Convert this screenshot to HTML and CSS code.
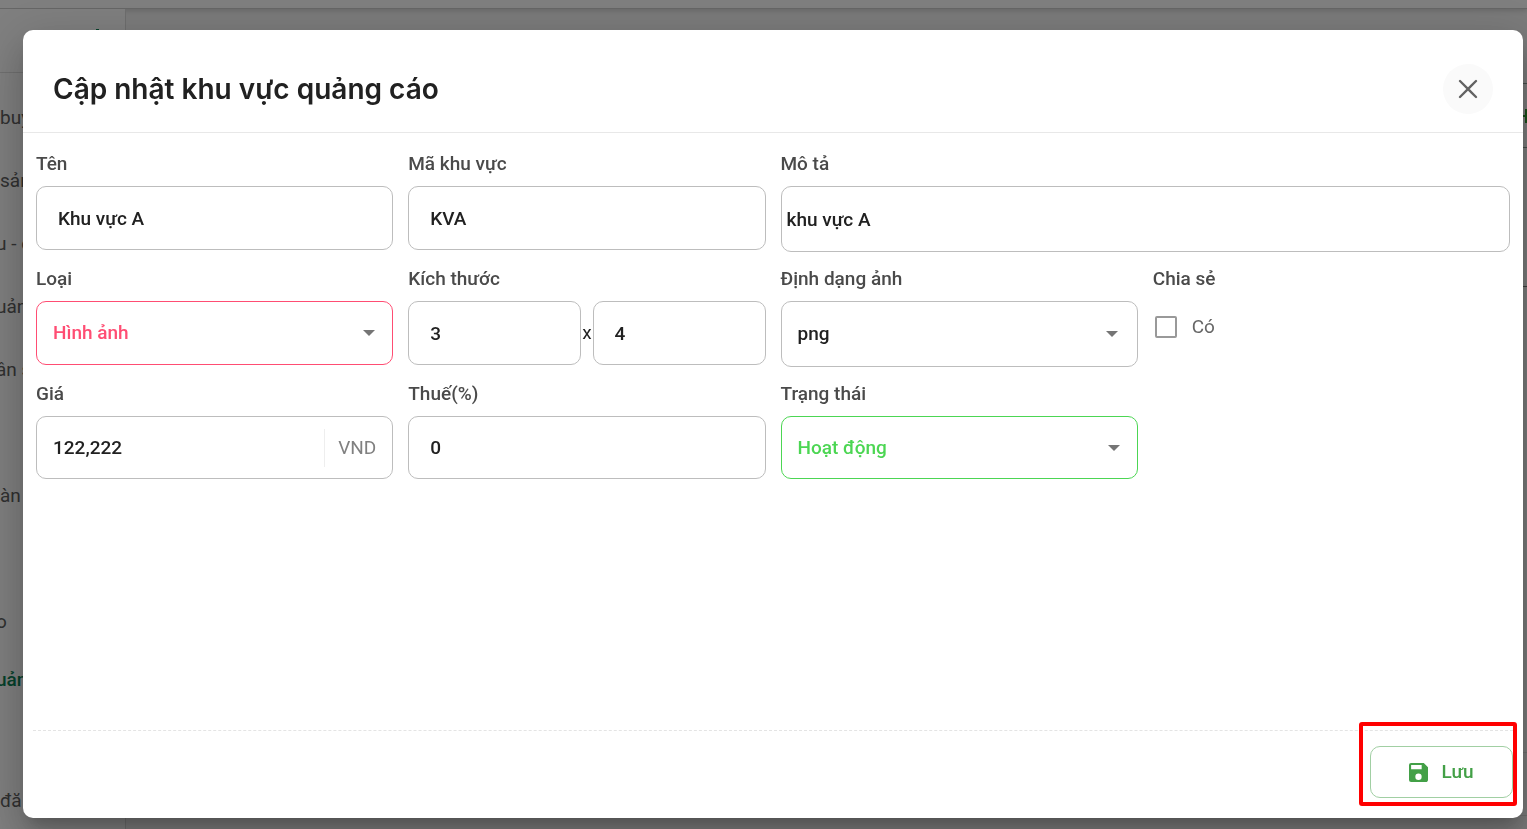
FILE: index.html
```html
<!DOCTYPE html>
<html lang="vi">
<head>
<meta charset="utf-8">
<title>Cập nhật khu vực quảng cáo</title>
<link rel="stylesheet" href="styles.css">
</head>
<body>
<div class="app">
  <div class="topbar"></div>
  <div class="shell">
    <nav class="sidebar">
      <div class="brand"><span class="brand-mark"></span></div>
      <ul class="menu">
        <li>buy</li>
        <li>sản</li>
        <li class="cut">u - c</li>
        <li class="cut">uản</li>
        <li class="cut">ân s</li>
        <li class="spaced">àn</li>
        <li class="spaced cut">o</li>
        <li class="active cut">uản</li>
        <li class="spaced">đă</li>
      </ul>
    </nav>
    <div class="content">
      <div class="toolbar"></div>
      <div class="add"><svg width="14" height="16" viewBox="0 0 14 16"><path d="M0 8h14M7 1v14" stroke="#2e9a2e" stroke-width="2"/></svg></div>
      <div class="panel"></div>
      <div class="sheet"></div>
      <div class="pager"></div>
    </div>
  </div>
</div>

<div class="backdrop">
  <section class="dialog" role="dialog" aria-labelledby="dialog-title">
    <header class="dialog-header">
      <h1 class="dialog-title" id="dialog-title">Cập nhật khu vực quảng cáo</h1>
      <button class="close" type="button" aria-label="Đóng">
        <svg width="20" height="20" viewBox="0 0 20 20"><path d="M2 2l16 16M18 2L2 18" fill="none" stroke="#626262" stroke-width="2.3" stroke-linecap="round"/></svg>
      </button>
    </header>

    <form class="form">
      <div class="field">
        <label class="label" for="name">Tên</label>
        <input class="control" id="name" type="text" value="Khu vực A">
      </div>
      <div class="field">
        <label class="label" for="code">Mã khu vực</label>
        <input class="control" id="code" type="text" value="KVA">
      </div>
      <div class="field wide">
        <label class="label" for="desc">Mô tả</label>
        <input class="control tall snug" id="desc" type="text" value="khu vực A">
      </div>

      <div class="field">
        <label class="label" for="type">Loại</label>
        <div class="picker">
          <select class="control select red" id="type"><option>Hình ảnh</option></select>
          <svg class="arrow" width="12" height="6" viewBox="0 0 12 6"><path d="M0 0h12L6 6z" fill="#757575"/></svg>
        </div>
      </div>
      <div class="field">
        <label class="label" for="size-w">Kích thước</label>
        <div class="size">
          <input class="control" id="size-w" type="text" value="3">
          <span class="times">x</span>
          <input class="control" type="text" aria-label="Chiều cao" value="4">
        </div>
      </div>
      <div class="field">
        <label class="label" for="format">Định dạng ảnh</label>
        <div class="picker">
          <select class="control tall select" id="format"><option>png</option></select>
          <svg class="arrow inset" width="12" height="6" viewBox="0 0 12 6"><path d="M0 0h12L6 6z" fill="#757575"/></svg>
        </div>
      </div>
      <div class="field">
        <span class="label">Chia sẻ</span>
        <label class="check"><input class="box" type="checkbox">Có</label>
      </div>

      <div class="field">
        <label class="label" for="price">Giá</label>
        <div class="control short money">
          <input class="amount" id="price" type="text" value="122,222">
          <span class="unit">VND</span>
        </div>
      </div>
      <div class="field">
        <label class="label" for="tax">Thuế(%)</label>
        <input class="control short" id="tax" type="text" value="0">
      </div>
      <div class="field">
        <label class="label" for="status">Trạng thái</label>
        <div class="picker">
          <select class="control short select green" id="status"><option>Hoạt động</option></select>
          <svg class="arrow" width="12" height="6" viewBox="0 0 12 6"><path d="M0 0h12L6 6z" fill="#757575"/></svg>
        </div>
      </div>
    </form>

    <footer class="dialog-footer">
      <div class="save-wrap">
        <button class="save" type="button">
          <svg width="19" height="19" viewBox="3 3 18 18"><path d="M17 3H5a2 2 0 0 0-2 2v14a2 2 0 0 0 2 2h14c1.100 0 2-.9 2-2V7zm-5 16a3 3 0 1 1 0-6 3 3 0 0 1 0 6zm3-10H5V5h10z" fill="#43a047"/></svg>
          Lưu
        </button>
        <div class="highlight"></div>
      </div>
    </footer>
  </section>
</div>
</body>
</html>
```
FILE: styles.css
```css
* { box-sizing: border-box; }

body {
  margin: 0;
  font-family: Roboto, "Noto Sans", sans-serif;
  font-size: 19px;
  font-weight: 500;
  line-height: 24px;
  color: #212121;
}

.app {
  display: flex;
  flex-direction: column;
  height: 100vh;
  overflow: hidden;
  background: #f6f6f6;
}

.topbar {
  flex: none;
  height: 9px;
  background: #fff;
  border-bottom: 1px solid #ccc;
  box-shadow: 0 2px 5px rgba(0, 0, 0, 0.15);
}

.shell {
  display: flex;
  flex: 1;
  min-height: 0;
}

.sidebar {
  width: 126px;
  background: #fff;
  border-right: 1px solid #dcdcdc;
}

.brand {
  display: flex;
  justify-content: flex-end;
  height: 64px;
  padding: 20px 26px 0 0;
  border-bottom: 1px solid #e0e0e0;
}

.brand-mark {
  width: 3px;
  height: 6px;
  background: #0b8457;
}

.menu {
  margin: 0;
  padding: 13px 0 0;
  list-style: none;
  color: #616161;
  font-weight: 400;
}

.menu li {
  height: 63px;
  line-height: 63px;
}

.menu .spaced { margin-top: 63px; }

.menu .cut { text-indent: -4px; }

.menu .active {
  height: 53px;
  line-height: 53px;
  color: #0b8457;
  font-weight: 500;
}

.content {
  display: flex;
  flex: 1;
  flex-direction: column;
  margin-left: 6px;
}

.toolbar { height: 54px; }

.add {
  display: flex;
  align-items: center;
  justify-content: flex-end;
  height: 65px;
  margin-top: 20px;
  border: solid #8a9a92;
  border-width: 1px 0;
}

.add svg { margin-right: -6px; }

.panel { height: 139px; border-bottom: 1px solid #777; }

.sheet { height: 466px; border-bottom: 1px solid #ddd; }

.pager { height: 63px; border-bottom: 1px solid #ddd; }

.backdrop {
  position: fixed;
  inset: 0;
  display: flex;
  padding: 30px 4px 11px 23px;
  background: rgba(0, 0, 0, 0.5);
}

.dialog {
  display: flex;
  flex: 1;
  flex-direction: column;
  background: #fff;
  border-radius: 10px;
  box-shadow: 0 11px 15px -7px rgba(0, 0, 0, 0.2), 0 24px 38px 3px rgba(0, 0, 0, 0.14), 0 9px 46px 8px rgba(0, 0, 0, 0.12);
}

.dialog-header {
  display: flex;
  align-items: center;
  justify-content: space-between;
  padding: 34px 30px 18px;
  border-bottom: 1px solid #e8e8e8;
}

.dialog-title {
  margin: 0;
  font-family: Inter, "Noto Sans", sans-serif;
  font-size: 28px;
  font-weight: 600;
  line-height: 36px;
}

.close {
  display: grid;
  place-items: center;
  width: 50px;
  height: 50px;
  padding: 0;
  border: 0;
  border-radius: 50%;
  background: #fafafa;
}

.form {
  display: grid;
  flex: 1;
  grid-template-columns: repeat(4, 1fr);
  align-content: start;
  gap: 15px;
  padding: 19px 13px 0;
}

.field {
  display: flex;
  flex-direction: column;
  gap: 10px;
  min-width: 0;
}

.wide { grid-column: span 2; }

.label { color: #4a4a4a; }

.control {
  width: 100%;
  height: 64px;
  padding: 0 21px;
  border: 1px solid #bdbdbd;
  border-radius: 10px;
  background: #fff;
  color: #212121;
  font: inherit;
}

.tall { height: 66px; }

.short { height: 63px; }

.snug { padding: 0 5px; }

.picker {
  display: grid;
  align-items: center;
}

.picker > * { grid-area: 1 / 1; }

.select {
  padding: 0 16px;
  appearance: none;
}

.red { border-color: #ff4d73; color: #ff4d73; }

.green { border-color: #4cd653; color: #4cd653; }

.arrow {
  justify-self: end;
  margin-right: 18px;
  pointer-events: none;
}

.inset { margin-right: 20px; }

.size {
  display: flex;
  align-items: center;
}

.size .control { flex: 1; min-width: 0; }

.times { padding: 0 1px; font-weight: 400; }

.check {
  display: flex;
  align-items: center;
  gap: 15px;
  padding: 14px 2px;
  color: #666;
  font-weight: 400;
}

.box {
  width: 22px;
  height: 22px;
  margin: 0;
  border: 2px solid #999;
  border-radius: 2px;
  appearance: none;
}

.money {
  display: flex;
  align-items: center;
  padding: 0 16px;
}

.amount {
  flex: 1;
  min-width: 0;
  padding: 0;
  border: 0;
  color: inherit;
  font: inherit;
}

.unit {
  padding-left: 13px;
  border-left: 1px solid #eee;
  color: #808080;
  font-weight: 400;
  line-height: 38px;
}

.dialog-footer {
  display: flex;
  justify-content: flex-end;
  margin: 0 10px;
  padding: 15px 0 20px;
  border-top: 1px dashed #e4e4e4;
}

.save-wrap { position: relative; }

.save {
  display: flex;
  align-items: center;
  justify-content: center;
  gap: 13px;
  width: 143px;
  height: 52px;
  border: 1px solid #a1cfa3;
  border-radius: 10px;
  background: #fff;
  color: #43a047;
  font: inherit;
}

.highlight {
  position: absolute;
  inset: -24px -4px -8px -11px;
  border: 4px solid #f00;
  border-radius: 3px;
  pointer-events: none;
}
```
